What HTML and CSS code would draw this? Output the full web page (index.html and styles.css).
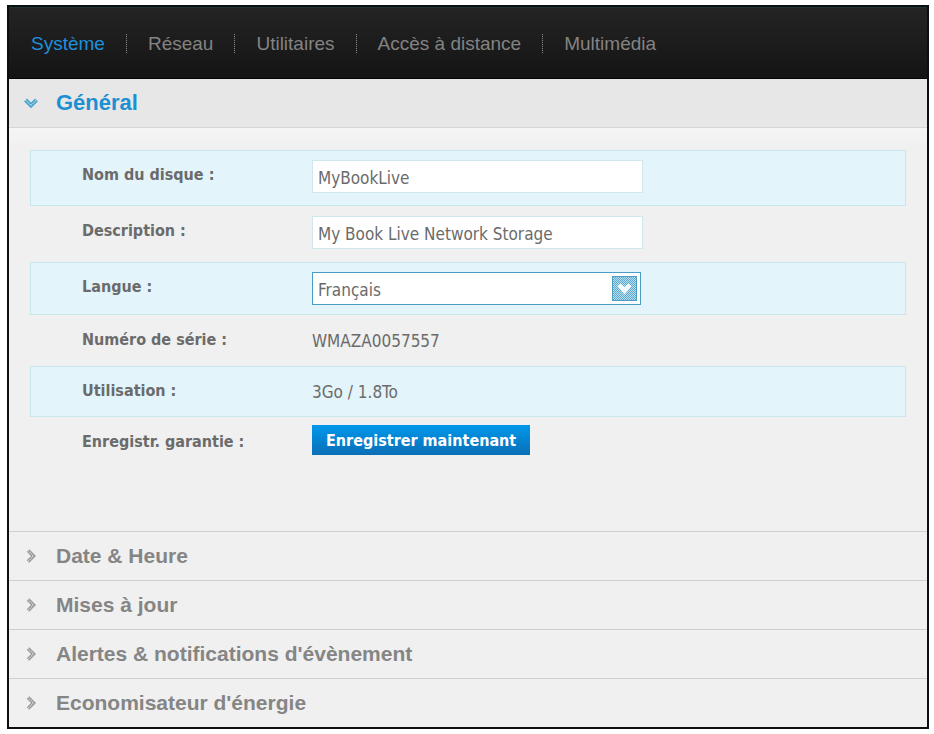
FILE: index.html
```html
<!DOCTYPE html>
<html lang="fr">
<head>
<meta charset="utf-8">
<title>Système</title>
<link rel="stylesheet" href="styles.css">
</head>
<body>
<div class="frame">
  <nav class="tabs">
    <a class="tab tab-active" href="#systeme">Système</a>
    <a class="tab" href="#reseau">Réseau</a>
    <a class="tab" href="#utilitaires">Utilitaires</a>
    <a class="tab" href="#acces">Accès à distance</a>
    <a class="tab" href="#multimedia">Multimédia</a>
  </nav>

  <main class="accordion">
    <h2 class="section section-open">
      <button class="section-toggle" type="button" aria-expanded="true">
        <svg class="chevron" viewBox="0 0 14 14" aria-hidden="true"><path d="M1.500 4l5.500 5.500L12.500 4" fill="none" stroke="#4aa3cc" stroke-width="4"/><path d="M1.500 4l5.500 5.500L12.500 4" fill="none" stroke="#b9dcea" stroke-width="1.500" stroke-dasharray="1 1"/></svg>
        <span>Général</span>
      </button>
    </h2>
    <form class="panel">
      <div class="row row-tint row-field">
        <label class="label" for="name">Nom du disque :</label>
        <input class="control" id="name" type="text" value="MyBookLive">
      </div>
      <div class="row row-field">
        <label class="label" for="desc">Description :</label>
        <input class="control" id="desc" type="text" value="My Book Live Network Storage">
      </div>
      <div class="row row-tint row-select">
        <label class="label" for="lang">Langue :</label>
        <div class="select">
          <select class="control control-select" id="lang"><option>Français</option></select>
          <svg class="select-arrow" viewBox="0 0 25 25" aria-hidden="true">
            <defs><pattern id="hatch" width="2" height="2" patternUnits="userSpaceOnUse"><rect width="2" height="2" fill="#b4dcee"/><path d="M0 0h1v1H0zM1 1h1v1H1z" fill="#5fabd0"/></pattern></defs>
            <rect x=".5" y=".5" width="24" height="24" fill="url(#hatch)" stroke="#4b9fc6"/>
            <path d="M5.500 10l3-2.500 4 3.500 4-3.500 3 2.500-7 8.500z" fill="#f4fbfe"/>
          </svg>
        </div>
      </div>
      <div class="row">
        <span class="label">Numéro de série :</span>
        <span class="value">WMAZA0057557</span>
      </div>
      <div class="row row-tint">
        <span class="label">Utilisation :</span>
        <span class="value">3Go / 1.8To</span>
      </div>
      <div class="row">
        <span class="label">Enregistr. garantie :</span>
        <button class="action" type="button">Enregistrer maintenant</button>
      </div>
    </form>

    <h2 class="section">
      <button class="section-toggle" type="button" aria-expanded="false">
        <svg class="chevron" viewBox="0 0 14 14" aria-hidden="true"><path d="M4 1.500L9.500 7 4 12.500" fill="none" stroke="#969696" stroke-width="3.500"/><path d="M4 1.500L9.500 7 4 12.500" fill="none" stroke="#dcdcdc" stroke-width="1.500" stroke-dasharray="1 1"/></svg>
        <span>Date &amp; Heure</span>
      </button>
    </h2>
    <h2 class="section">
      <button class="section-toggle" type="button" aria-expanded="false">
        <svg class="chevron" viewBox="0 0 14 14" aria-hidden="true"><path d="M4 1.500L9.500 7 4 12.500" fill="none" stroke="#969696" stroke-width="3.500"/><path d="M4 1.500L9.500 7 4 12.500" fill="none" stroke="#dcdcdc" stroke-width="1.500" stroke-dasharray="1 1"/></svg>
        <span>Mises à jour</span>
      </button>
    </h2>
    <h2 class="section">
      <button class="section-toggle" type="button" aria-expanded="false">
        <svg class="chevron" viewBox="0 0 14 14" aria-hidden="true"><path d="M4 1.500L9.500 7 4 12.500" fill="none" stroke="#969696" stroke-width="3.500"/><path d="M4 1.500L9.500 7 4 12.500" fill="none" stroke="#dcdcdc" stroke-width="1.500" stroke-dasharray="1 1"/></svg>
        <span>Alertes &amp; notifications d'évènement</span>
      </button>
    </h2>
    <h2 class="section">
      <button class="section-toggle" type="button" aria-expanded="false">
        <svg class="chevron" viewBox="0 0 14 14" aria-hidden="true"><path d="M4 1.500L9.500 7 4 12.500" fill="none" stroke="#969696" stroke-width="3.500"/><path d="M4 1.500L9.500 7 4 12.500" fill="none" stroke="#dcdcdc" stroke-width="1.500" stroke-dasharray="1 1"/></svg>
        <span>Economisateur d'énergie</span>
      </button>
    </h2>
  </main>
</div>
</body>
</html>
```
FILE: styles.css
```css
* {
  box-sizing: border-box;
}

body {
  margin: 0;
  padding: 5px 5px 5px 7px;
  min-height: 100vh;
  display: flex;
  background: #fff;
  font-family: "DejaVu Sans Condensed", "DejaVu Sans", sans-serif;
  font-size: 17px;
  color: #6b6b6b;
}

.frame {
  flex: 1;
  display: flex;
  flex-direction: column;
  border: 2px solid #0c0f10;
  background: #f0f0f0;
}

.tabs {
  display: flex;
  align-items: center;
  height: 72px;
  padding: 2px 22px 0;
  border-top: 1px solid #1f3434;
  border-bottom: 1px solid #050505;
  background: linear-gradient(#242424, #141414);
  font-family: "Liberation Sans", Arial, sans-serif;
  font-size: 19px;
}

.tab {
  display: flex;
  align-items: center;
  color: #838383;
  line-height: 24px;
  text-decoration: none;
}

.tab + .tab::before {
  content: "";
  width: 1px;
  height: 20px;
  margin: 0 21px;
  background: repeating-linear-gradient(#8a8a8a 0 1px, #222 1px 2px);
}

.tab-active {
  color: #1e90dc;
}

.accordion {
  flex: 1;
  display: flex;
  flex-direction: column;
}

.section {
  margin: 0;
  border-top: 1px solid #cfcfcf;
  font-family: "Liberation Sans", Arial, sans-serif;
  font-size: 21px;
  color: #858585;
}

.section-open {
  border-top: 0;
  border-bottom: 1px solid #d6d6d6;
  background: #e7e7e7;
  color: #1d90d2;
  font-size: 22px;
}

.section-toggle {
  display: flex;
  align-items: center;
  gap: 18px;
  width: 100%;
  height: 48px;
  padding: 0 15px;
  border: 0;
  background: none;
  color: inherit;
  font: inherit;
  text-align: left;
}

.chevron {
  width: 14px;
  height: 14px;
}

.panel {
  flex: 1;
  padding: 22px 21px 0;
  background: linear-gradient(#f5f5f5, #f0f0f0 20px);
}

.row {
  display: flex;
  align-items: flex-start;
  min-height: 51px;
  border: 1px solid transparent;
}

.row-tint {
  border-color: #c9e6ec;
  background: #e3f4fa;
}

.row-field,
.row-select {
  padding-top: 9px;
}

.row-field {
  min-height: 56px;
}

.row-select {
  min-height: 53px;
}

.label {
  width: 281px;
  padding: 14px 0 0 51px;
  font-size: 16px;
  font-weight: bold;
  line-height: 20px;
}

.row-field .label,
.row-select .label {
  padding-top: 5px;
}

.value {
  padding-top: 15px;
  line-height: 20px;
}

.control {
  width: 331px;
  height: 33px;
  padding: 3px 5px 0;
  border: 1px solid #cfe8ee;
  border-radius: 0;
  background: #fff;
  color: #6b6b6b;
  font: inherit;
}

.select {
  position: relative;
  width: 329px;
}

.control-select {
  display: block;
  width: 100%;
  border-color: #4a9cc4;
  appearance: none;
}

.select-arrow {
  position: absolute;
  top: 4px;
  right: 4px;
  width: 25px;
  height: 25px;
}

.action {
  height: 30px;
  margin-top: 7px;
  padding: 0 14px;
  border: 0;
  background: linear-gradient(#0098ec, #0a6fb6);
  color: #fff;
  font: inherit;
  font-size: 16px;
  font-weight: bold;
}
```
